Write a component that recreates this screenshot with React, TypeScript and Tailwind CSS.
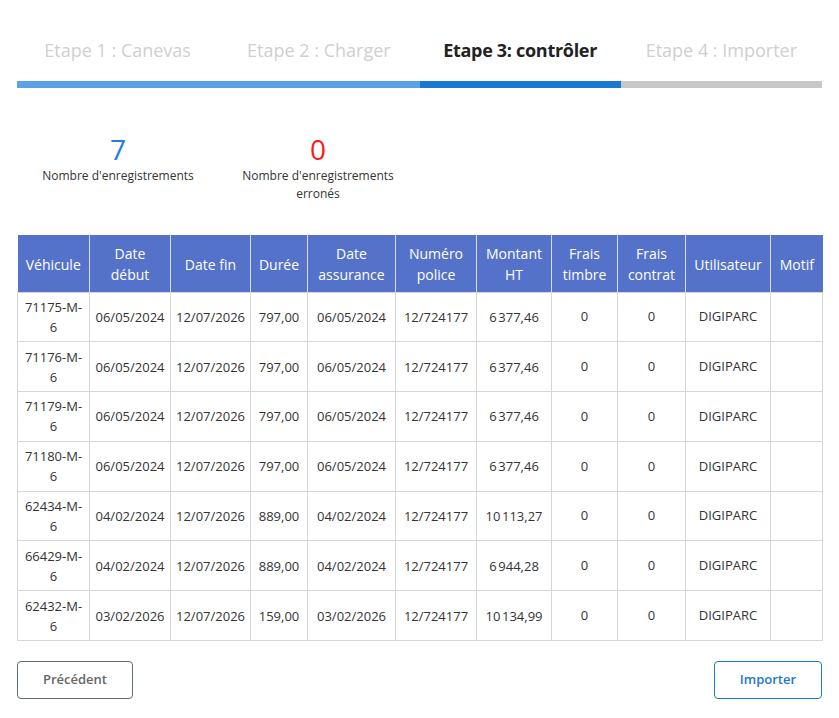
import React from 'react';

const steps = [
  { label: 'Etape 1 : Canevas', state: 'done' },
  { label: 'Etape 2 : Charger', state: 'done' },
  { label: 'Etape 3: contrôler', state: 'current' },
  { label: 'Etape 4 : Importer', state: 'todo' },
];

const columns = [
  { label: ['Véhicule'], w: 'w-[72px]' },
  { label: ['Date', 'début'], w: 'w-[81px]' },
  { label: ['Date fin'], w: 'w-[80px]' },
  { label: ['Durée'], w: 'w-[57px]' },
  { label: ['Date', 'assurance'], w: 'w-[88px]' },
  { label: ['Numéro', 'police'], w: 'w-[81px]' },
  { label: ['Montant', 'HT'], w: 'w-[75px]' },
  { label: ['Frais', 'timbre'], w: 'w-[66px]' },
  { label: ['Frais', 'contrat'], w: 'w-[68px]' },
  { label: ['Utilisateur'], w: 'w-[85px]' },
  { label: ['Motif'], w: 'w-[52px]' },
];

// narrow no-break space as thousands separator
const rows = [
  ['71175-M-6', '06/05/2024', '12/07/2026', '797,00', '06/05/2024', '12/724177', '6\u202F377,46'],
  ['71176-M-6', '06/05/2024', '12/07/2026', '797,00', '06/05/2024', '12/724177', '6\u202F377,46'],
  ['71179-M-6', '06/05/2024', '12/07/2026', '797,00', '06/05/2024', '12/724177', '6\u202F377,46'],
  ['71180-M-6', '06/05/2024', '12/07/2026', '797,00', '06/05/2024', '12/724177', '6\u202F377,46'],
  ['62434-M-6', '04/02/2024', '12/07/2026', '889,00', '04/02/2024', '12/724177', '10\u202F113,27'],
  ['66429-M-6', '04/02/2024', '12/07/2026', '889,00', '04/02/2024', '12/724177', '6\u202F944,28'],
  ['62432-M-6', '03/02/2026', '12/07/2026', '159,00', '03/02/2026', '12/724177', '10\u202F134,99'],
];

export default function App() {
  return (
    <div className="min-h-screen bg-white px-[17px] pt-[35px] text-[#333]" style={{ fontFamily: '"Open Sans", "Noto Sans", sans-serif' }}>
      {/* Stepper */}
      <div className="grid grid-cols-4">
        {steps.map((s) => (
          <div key={s.label} className="flex flex-col">
            <div
              className={`h-[30px] text-center text-[18px] leading-[30px] ${
                s.state === 'current' ? 'font-bold tracking-[-0.3px] text-[#222]' : 'text-[#cfcfcf]'
              }`}
            >
              {s.label}
            </div>
            <div
              className={`mt-[16px] h-[7px] ${
                s.state === 'done' ? 'bg-[#5aa2e6]' : s.state === 'current' ? 'bg-[#1a77d2]' : 'bg-[#c8c8c8]'
              }`}
            />
          </div>
        ))}
      </div>

      {/* Stats */}
      <div className="mt-[44px] flex gap-[40px] pl-[21px]">
        <div className="flex w-[160px] flex-col items-center text-center">
          <div className="text-[28px] leading-[34px] text-[#1e7be8]">7</div>
          <div className="mt-[1px] text-[12px] leading-[18px] text-[#333]">Nombre d'enregistrements</div>
        </div>
        <div className="flex w-[160px] flex-col items-center text-center">
          <div className="text-[28px] leading-[34px] text-[#ff1a1a]">0</div>
          <div className="mt-[1px] text-[12px] leading-[18px] text-[#333]">Nombre d'enregistrements erronés</div>
        </div>
      </div>

      {/* Table */}
      <table className="mt-[32px] w-[805px] table-fixed border-collapse text-[13px]">
        <thead>
          <tr className="h-[57px] bg-[#5472c9] text-white">
            {columns.map((c, i) => (
              <th
                key={i}
                className={`${c.w} border border-[#dcdcdc] border-b-0 border-t-0 px-1 pt-[2px] text-center text-[14px] font-normal leading-[21px] first:border-l-0 last:border-r-0`}
              >
                {c.label.map((l) => (
                  <div key={l}>{l}</div>
                ))}
              </th>
            ))}
          </tr>
        </thead>
        <tbody>
          {rows.map((r, i) => (
            <tr key={i} className="h-[49.8px]">
              {r.map((v, j) => (
                <td key={j} className="border border-[#d6d6d6] px-1 text-center leading-[20px]">
                  {j === 0 ? (
                    <>
                      <div>{v.slice(0, 8)}</div>
                      <div>{v.slice(8)}</div>
                    </>
                  ) : (
                    v
                  )}
                </td>
              ))}
              <td className="border border-[#d6d6d6] text-center">0</td>
              <td className="border border-[#d6d6d6] text-center">0</td>
              <td className="border border-[#d6d6d6] text-center">DIGIPARC</td>
              <td className="border border-[#d6d6d6]" />
            </tr>
          ))}
        </tbody>
      </table>

      {/* Buttons */}
      <div className="mt-[20px] flex w-[805px] justify-between">
        <button className="h-[38px] w-[116px] rounded-[4px] border border-[#5f6b73] text-[13px] font-semibold text-[#666]">
          Précédent
        </button>
        <button className="h-[38px] w-[108px] rounded-[4px] border border-[#1a77d2] text-[13px] font-semibold text-[#1a77d2]">
          Importer
        </button>
      </div>
    </div>
  );
}
